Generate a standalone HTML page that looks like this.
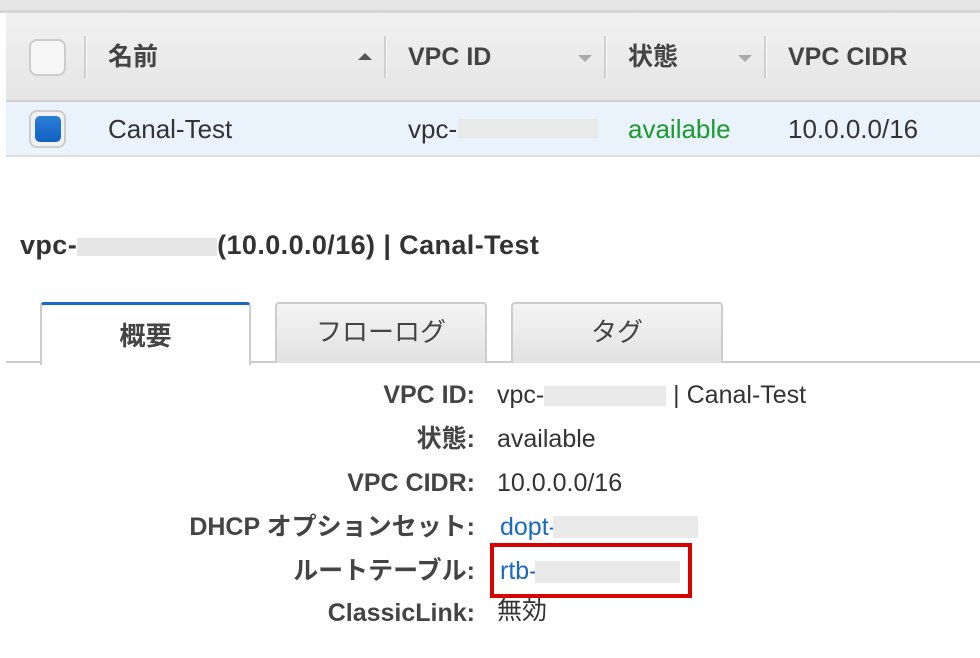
<!DOCTYPE html>
<html><head><meta charset="utf-8"><style>
*{margin:0;padding:0;box-sizing:border-box}
body{width:980px;height:658px;background:#fff;position:relative;overflow:hidden;font-family:"Liberation Sans","Noto Sans CJK JP",sans-serif;color:#333}
.a{position:absolute;white-space:nowrap;line-height:30px}
.blur{position:absolute;background:#e9e9e9}
.hd{font-weight:bold;font-size:25px;color:#444}
.sep{position:absolute;top:36px;width:3px;height:42px;background:#d0d0d0;border-right:1px solid #fafafa}
.tri{position:absolute;width:0;height:0;border-left:7px solid transparent;border-right:7px solid transparent}
.lab{position:absolute;right:505px;font-weight:bold;font-size:25px;color:#444;white-space:nowrap;line-height:30px}
.val{position:absolute;left:497px;font-size:25px;color:#333;white-space:nowrap;line-height:30px}
.tab{position:absolute;top:302px;height:61px;border:2px solid #ccc;border-bottom:none;border-radius:4px 4px 0 0;background:linear-gradient(#f4f4f4,#e2e2e2);font-size:26px;text-align:center;line-height:56px;color:#444}
</style></head><body>
<div class="a" style="left:0;top:0;width:980px;height:10px;background:#e6e6e6"></div>
<div class="a" style="left:0;top:10px;width:980px;height:3px;background:#d6d6d6"></div>
<div class="a" style="left:6px;top:13px;width:974px;height:87px;background:linear-gradient(#f1f1f1,#e5e5e5)"></div>
<div class="a" style="left:6px;top:100px;width:974px;height:2px;background:#d0d0d0"></div>
<div class="a" style="left:6px;top:102px;width:974px;height:54px;background:#eaf2fc"></div>
<div class="a" style="left:6px;top:155px;width:974px;height:2px;background:#dcdcdc"></div>

<div class="a" style="left:29px;top:39px;width:37px;height:37px;border:2px solid #ccc;border-radius:8px;background:#f6f6f6"></div>
<div class="sep" style="left:84px"></div>
<div class="a hd" style="left:108px;top:42px">名前</div>
<div class="tri" style="left:358px;top:53px;border-bottom:7px solid #555"></div>
<div class="sep" style="left:384px"></div>
<div class="a hd" style="left:408px;top:42px">VPC ID</div>
<div class="tri" style="left:578px;top:55px;border-top:7px solid #aaa"></div>
<div class="sep" style="left:604px"></div>
<div class="a hd" style="left:628px;top:42px">状態</div>
<div class="tri" style="left:738px;top:55px;border-top:7px solid #aaa"></div>
<div class="sep" style="left:764px"></div>
<div class="a hd" style="left:788px;top:42px">VPC CIDR</div>

<div class="a" style="left:29px;top:110px;width:37px;height:38px;border:2px solid #ccc;border-radius:8px;background:#f2f2f2"></div>
<div class="a" style="left:35px;top:116px;width:26px;height:26px;border-radius:5px;background:linear-gradient(#2a7fd8,#1161c2)"></div>
<div class="a" style="left:108px;top:114px;font-size:26px">Canal-Test</div>
<div class="a" style="left:408px;top:114px;font-size:26px">vpc-</div>
<div class="blur" style="left:458px;top:119px;width:140px;height:19px"></div>
<div class="a" style="left:628px;top:114px;font-size:26px;color:#1c9a2e">available</div>
<div class="a" style="left:788px;top:114px;font-size:26px">10.0.0.0/16</div>

<div class="a" style="left:20px;top:230px;font-size:27px;font-weight:bold;color:#333;letter-spacing:0.4px">vpc-<span style="display:inline-block;width:140px;height:18px;background:#e6e6e6;vertical-align:middle"></span>(10.0.0.0/16) | Canal-Test</div>

<div class="a" style="left:6px;top:361px;width:974px;height:2px;background:#ccc"></div>
<div class="tab" style="left:40px;width:211px;height:63px;background:#fff;border-top:3px solid #1a6ac4;font-weight:bold;line-height:62px">概要</div>
<div class="tab" style="left:275px;width:212px">フローログ</div>
<div class="tab" style="left:511px;width:212px">タグ</div>

<div class="lab" style="top:380px">VPC ID:</div>
<div class="val" style="top:380px">vpc-<span style="display:inline-block;width:122px;height:20px;background:#e9e9e9;vertical-align:-3px"></span> | Canal-Test</div>
<div class="lab" style="top:424px">状態:</div>
<div class="val" style="top:424px">available</div>
<div class="lab" style="top:468px">VPC CIDR:</div>
<div class="val" style="top:468px">10.0.0.0/16</div>
<div class="lab" style="top:512px">DHCP オプションセット:</div>
<div class="val" style="top:512px;left:500px;color:#1a6ac4">dopt-</div>
<div class="blur" style="left:553px;top:516px;width:145px;height:22px"></div>
<div class="lab" style="top:556px">ルートテーブル:</div>
<div class="val" style="top:556px;left:500px;color:#1a6ac4">rtb-</div>
<div class="blur" style="left:535px;top:561px;width:145px;height:22px"></div>
<div class="a" style="left:490px;top:543px;width:202px;height:55px;border:4px solid #d90000"></div>
<div class="lab" style="top:598px">ClassicLink:</div>
<div class="val" style="top:596px">無効</div>
</body></html>
